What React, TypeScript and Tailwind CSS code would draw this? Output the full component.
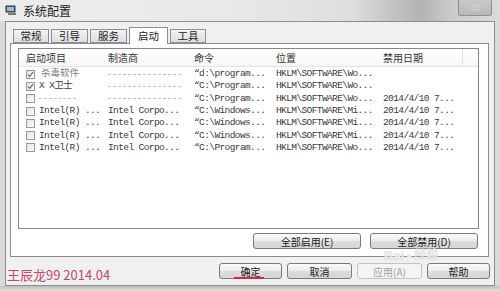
import React from 'react';

const cjk = '"Noto Sans CJK SC", "Liberation Sans", sans-serif';
const mono = '"Liberation Mono", "Noto Sans CJK SC", monospace';

interface StartupRow {
    name: string | null;
    maker: string | null;
    command: string;
    location: string;
    disabledAt: string;
    checked: boolean;
    nameGray?: boolean;
}

const rows: StartupRow[] = [
    { name: '杀毒软件', maker: null, command: '“d:\\program...', location: 'HKLM\\SOFTWARE\\Wo...', disabledAt: '', checked: true, nameGray: true },
    { name: 'X X卫士', maker: null, command: '“C:\\Program...', location: 'HKLM\\SOFTWARE\\Wo...', disabledAt: '', checked: true },
    { name: null, maker: null, command: '“C:\\Program...', location: 'HKLM\\SOFTWARE\\Wo...', disabledAt: '2014/4/10 7...', checked: false },
    { name: 'Intel(R) ...', maker: 'Intel Corpo...', command: '“C:\\Windows...', location: 'HKLM\\SOFTWARE\\Mi...', disabledAt: '2014/4/10 7...', checked: false },
    { name: 'Intel(R) ...', maker: 'Intel Corpo...', command: '“C:\\Windows...', location: 'HKLM\\SOFTWARE\\Mi...', disabledAt: '2014/4/10 7...', checked: false },
    { name: 'Intel(R) ...', maker: 'Intel Corpo...', command: '“C:\\Windows...', location: 'HKLM\\SOFTWARE\\Mi...', disabledAt: '2014/4/10 7...', checked: false },
    { name: 'Intel(R) ...', maker: 'Intel Corpo...', command: '“C:\\Program...', location: 'HKLM\\SOFTWARE\\Wo...', disabledAt: '2014/4/10 7...', checked: false },
];

const tabs = [
    { label: '常规', w: 'w-[36px]' },
    { label: '引导', w: 'w-[37px]' },
    { label: '服务', w: 'w-[37px]' },
    { label: '启动', w: 'w-[39px]', active: true },
    { label: '工具', w: 'w-[36px]' },
];

const Dashes: React.FC<{ width: string }> = ({ width }) => (
    <div className={`${width} h-0 border-t border-dashed border-[#d4bcbe]`} />
);

const CheckBox: React.FC<{ checked: boolean }> = ({ checked }) => (
    <div className="w-[9px] h-[9px] border border-[#9a9a9a] bg-[linear-gradient(135deg,#e4e4e4,#fbfbfb)] flex items-center justify-center">
        {checked && (
            <svg width="7" height="7" viewBox="0 0 7 7">
                <path d="M1 3.6 L2.8 5.4 L6 1.2" stroke="#6b6b6b" strokeWidth="1.2" fill="none" />
            </svg>
        )}
    </div>
);

const WinButton: React.FC<{ label: string; width: string; disabled?: boolean }> = ({ label, width, disabled }) => (
    <div
        className={`${width} h-[16px] rounded-[3px] border flex items-center justify-center text-[10px] ${
            disabled
                ? 'border-[#c2c5c8] bg-[#f4f4f4] text-[#a3a3a3]'
                : 'border-[#7a7a7a] bg-[linear-gradient(180deg,#fbfbfb_0%,#ececec_50%,#dcdcdc_51%,#d6d6d6_100%)] text-[#222]'
        }`}
        style={{ fontFamily: cjk }}
    >
        {label}
    </div>
);

export default function App() {
    return (
        <div className="w-[500px] h-[291px] overflow-hidden relative bg-[#dadada] flex flex-col" style={{ fontFamily: cjk }}>
            {/* title bar */}
            <div className="h-[21px] flex items-center bg-[linear-gradient(90deg,#ececec_0%,#e9e9e9_45%,#dedede_70%,#b3b3b3_84%,#c9c9c9_90%,#dcdcdc_100%)]">
                <svg className="ml-[5px]" width="12" height="11" viewBox="0 0 12 11">
                    <rect x="1" y="1" width="9" height="6" fill="#4a5d7a" stroke="#3a3a3a" strokeWidth="1" />
                    <rect x="2" y="2" width="7" height="4" fill="#9fb8d8" />
                    <path d="M3 9 H11" stroke="#555" strokeWidth="1.5" />
                </svg>
                <span className="ml-[6px] text-[12px] text-[#1d1d1d]">系统配置</span>
                <div className="ml-auto mr-[8px] self-start w-[34px] h-[16px] rounded-b-[3px] border border-t-0 border-[#8e8e8e] bg-[linear-gradient(180deg,#c9c9c9,#b9b9b9)] flex items-center justify-center">
                    <svg width="9" height="8" viewBox="0 0 9 8">
                        <path d="M1 1 L8 7 M8 1 L1 7" stroke="#f4f4f4" strokeWidth="2" />
                        <path d="M1 1 L8 7 M8 1 L1 7" stroke="#6b6b6b" strokeWidth="0.6" />
                    </svg>
                </div>
            </div>

            {/* client area */}
            <div className="mx-[5px] h-[265px] border border-[#8d8d8d] bg-[#f0f0f0] pl-[4px] pr-[4px] flex flex-col">
                {/* tabs */}
                <div className="mt-[5px] h-[16px] pl-[3px] flex items-end gap-[2px] relative z-10">
                    {tabs.map((t) => (
                        <div
                            key={t.label}
                            className={`${t.w} flex items-center justify-center text-[10.5px] text-[#222] border border-[#8c8f96] ${
                                t.active ? 'h-[17px] -mb-px bg-white border-b-0' : 'h-[14px] bg-[linear-gradient(180deg,#f4f4f4,#dedede)]'
                            }`}
                        >
                            {t.label}
                        </div>
                    ))}
                </div>

                {/* tab panel */}
                <div className="w-[479px] h-[214px] border border-[#898c95] bg-white flex flex-col">
                    {/* list */}
                    <div className="ml-[7px] mt-[4px] w-[461px] h-[181px] border border-[#828790] bg-white flex flex-col">
                        <div className="h-[18px] flex items-center border-b border-[#e3e3e3] bg-[linear-gradient(180deg,#ffffff,#f6f6f6)] text-[10px] text-[#333] pl-[7px]">
                            <div className="w-[82px]">启动项目</div>
                            <div className="w-[86px]">制造商</div>
                            <div className="w-[82px]">命令</div>
                            <div className="w-[107px]">位置</div>
                            <div className="w-[80px] h-full flex items-center border-r border-[#e3e3e3]">禁用日期</div>
                        </div>
                        <div className="pt-[1px]">
                            {rows.map((r, i) => (
                                <div
                                    key={i}
                                    className="h-[12.3px] flex items-center pl-[7px] text-[9.5px] tracking-[-0.6px] text-[#3a3a3a] whitespace-nowrap"
                                    style={{ fontFamily: mono }}
                                >
                                    <div className="w-[12px]">
                                        <CheckBox checked={r.checked} />
                                    </div>
                                    <div className={`w-[70px] ${r.nameGray ? 'text-[#808080] pl-[3px] tracking-[0px]' : 'pl-[1px]'}`}>
                                        {r.name === null ? <Dashes width="w-[37px]" /> : r.name}
                                    </div>
                                    <div className="w-[86px]">
                                        {r.maker === null ? <Dashes width="w-[73px]" /> : r.maker}
                                    </div>
                                    <div className="w-[82px]">{r.command}</div>
                                    <div className="w-[107px]">{r.location}</div>
                                    <div>{r.disabledAt}</div>
                                </div>
                            ))}
                        </div>
                    </div>

                    <div className="mt-[4px] pr-[10px] flex justify-end gap-[9px]">
                        <WinButton label="全部启用(E)" width="w-[108px]" />
                        <WinButton label="全部禁用(D)" width="w-[108px]" />
                    </div>
                </div>

                {/* bottom row */}
                <div className="mt-[6px] flex items-start">
                    <div className="mt-[5px] -ml-[3px] text-[13px] leading-[14px] text-[#c7466f]">王辰龙99 2014.04</div>
                    <div className="ml-auto flex gap-[5px] relative">
                        <div className="relative">
                            <WinButton label="确定" width="w-[63px]" />
                            <div className="absolute left-[15px] top-[14px] w-[30px] h-[2px] bg-[#d8284f]" />
                        </div>
                        <WinButton label="取消" width="w-[65px]" />
                        <WinButton label="应用(A)" width="w-[65px]" disabled />
                        <WinButton label="帮助" width="w-[63px]" />
                    </div>
                </div>
            </div>

            <div className="flex-1 bg-[linear-gradient(180deg,#bdbdbd,#e2e2e2)]" />

            {/* baidu watermark */}
            <div className="absolute left-[384px] top-[249px] h-[13px] flex items-center gap-[2px] text-[13px] leading-[13px] font-bold text-white/70 pointer-events-none [text-shadow:0_0_1px_#b8b8b8]" style={{ fontFamily: '"Liberation Sans", "Noto Sans CJK SC", sans-serif' }}>
                <span>Bai</span>
                <span className="text-[10px]">●</span>
                <span className="text-[12px]">经验</span>
            </div>
        </div>
    );
}
